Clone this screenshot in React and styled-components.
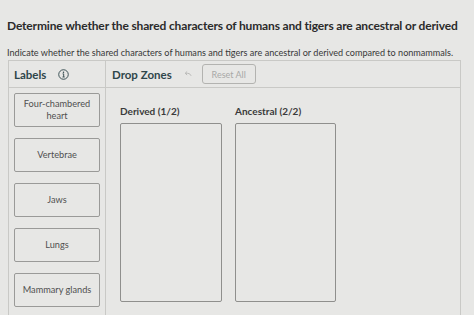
import styled, { createGlobalStyle } from "styled-components";

const Global = createGlobalStyle`
  html, body {
    margin: 0;
    padding: 0;
    background: #e7e7e5;
  }
  body {
    font-family: Lato, "Liberation Sans", sans-serif;
  }
`;

const Page = styled.div`
  width: 474px;
  height: 315px;
  overflow: hidden;
  padding: 18px 0 0 7px;
  box-sizing: border-box;
`;

const Title = styled.h1`
  margin: 0;
  font-size: 12px;
  font-weight: 700;
  color: #2b2b2b;
  line-height: 15px;
  letter-spacing: -0.15px;
  white-space: nowrap;
`;

const Prompt = styled.p`
  margin: 14px 0 0;
  font-size: 9.1px;
  color: #383838;
  line-height: 11px;
  white-space: nowrap;
`;

const Board = styled.div`
  margin: 2px 0 0 1px;
  width: 451px;
  height: 260px;
  border: 1px solid #c9c9c6;
  display: grid;
  grid-template-columns: 97px 1fr;
  grid-template-rows: 27px 1fr;
`;

const HeadCell = styled.div`
  display: flex;
  align-items: center;
  gap: ${(p) => p.$gap || 0}px;
  padding-left: ${(p) => p.$pad}px;
  border-bottom: 1px solid #c9c9c6;
  border-right: ${(p) => (p.$divider ? "1px solid #c9c9c6" : "none")};
`;

const HeadText = styled.span`
  font-size: 11.5px;
  font-weight: 700;
  color: #2f464a;
`;

const ResetButton = styled.button`
  margin-left: 10px;
  width: 54px;
  height: 20px;
  border: 1px solid #b3b3b0;
  border-radius: 3px;
  background: transparent;
  font-family: inherit;
  font-size: 9px;
  color: #a9a9a7;
  padding: 0;
`;

const LabelColumn = styled.div`
  border-right: 1px solid #c9c9c6;
  padding: 5px 0 0 5px;
  display: flex;
  flex-direction: column;
  gap: 11px;
`;

const Card = styled.div`
  width: 86px;
  height: 34px;
  flex-shrink: 0;
  box-sizing: border-box;
  border: 1px solid #9a9a98;
  border-radius: 2px;
  display: flex;
  align-items: center;
  justify-content: center;
  text-align: center;
  font-size: 9.2px;
  line-height: 12px;
  color: #505050;
  padding: 0 4px;
`;

const ZoneArea = styled.div`
  display: flex;
  gap: 13px;
  padding: 17px 0 0 14px;
`;

const Zone = styled.div`
  display: flex;
  flex-direction: column;
  gap: 6px;
`;

const ZoneTitle = styled.div`
  font-size: 10px;
  font-weight: 700;
  color: #3a3a3a;
  line-height: 12px;
`;

const DropBox = styled.div`
  width: ${(p) => p.$w}px;
  height: 179px;
  box-sizing: border-box;
  border: 1px solid #8f8f8d;
  border-radius: 2px;
`;

const InfoIcon = () => (
  <svg width="11" height="11" viewBox="0 0 12 12">
    <circle cx="6" cy="6" r="5.2" fill="none" stroke="#2f464a" strokeWidth="1" />
    <circle cx="6" cy="3.6" r="0.8" fill="#2f464a" />
    <path d="M5 5.3h1.2v3.3M4.9 8.7h2.4" fill="none" stroke="#2f464a" strokeWidth="1" />
  </svg>
);

const UndoIcon = () => (
  <svg width="9" height="8" viewBox="0 0 10 8">
    <path d="M9 6 C8 3.5 6 3 3 3.2 M4.6 1.2 L2.4 3.2 L4.6 5.1" fill="none" stroke="#b4b4b2" strokeWidth="1" />
  </svg>
);

const labels = [
  "Four-chambered heart",
  "Vertebrae",
  "Jaws",
  "Lungs",
  "Mammary glands",
];

const zones = [
  { name: "Derived (1/2)", width: 102 },
  { name: "Ancestral (2/2)", width: 101 },
];

const App = () => {
  return (
    <>
      <Global />
      <Page>
        <Title>
          Determine whether the shared characters of humans and tigers are ancestral or derived
        </Title>
        <Prompt>
          Indicate whether the shared characters of humans and tigers are ancestral or derived compared to nonmammals.
        </Prompt>
        <Board>
          <HeadCell $pad={5} $gap={12} $divider>
            <HeadText>Labels</HeadText>
            <InfoIcon />
          </HeadCell>
          <HeadCell $pad={6} $gap={0}>
            <HeadText>Drop Zones</HeadText>
            <span style={{ width: 11 }} />
            <UndoIcon />
            <ResetButton>Reset All</ResetButton>
          </HeadCell>
          <LabelColumn>
            {labels.map((l) => (
              <Card key={l}>{l}</Card>
            ))}
          </LabelColumn>
          <ZoneArea>
            {zones.map((z) => (
              <Zone key={z.name}>
                <ZoneTitle>{z.name}</ZoneTitle>
                <DropBox $w={z.width} />
              </Zone>
            ))}
          </ZoneArea>
        </Board>
      </Page>
    </>
  );
};

export default App;
